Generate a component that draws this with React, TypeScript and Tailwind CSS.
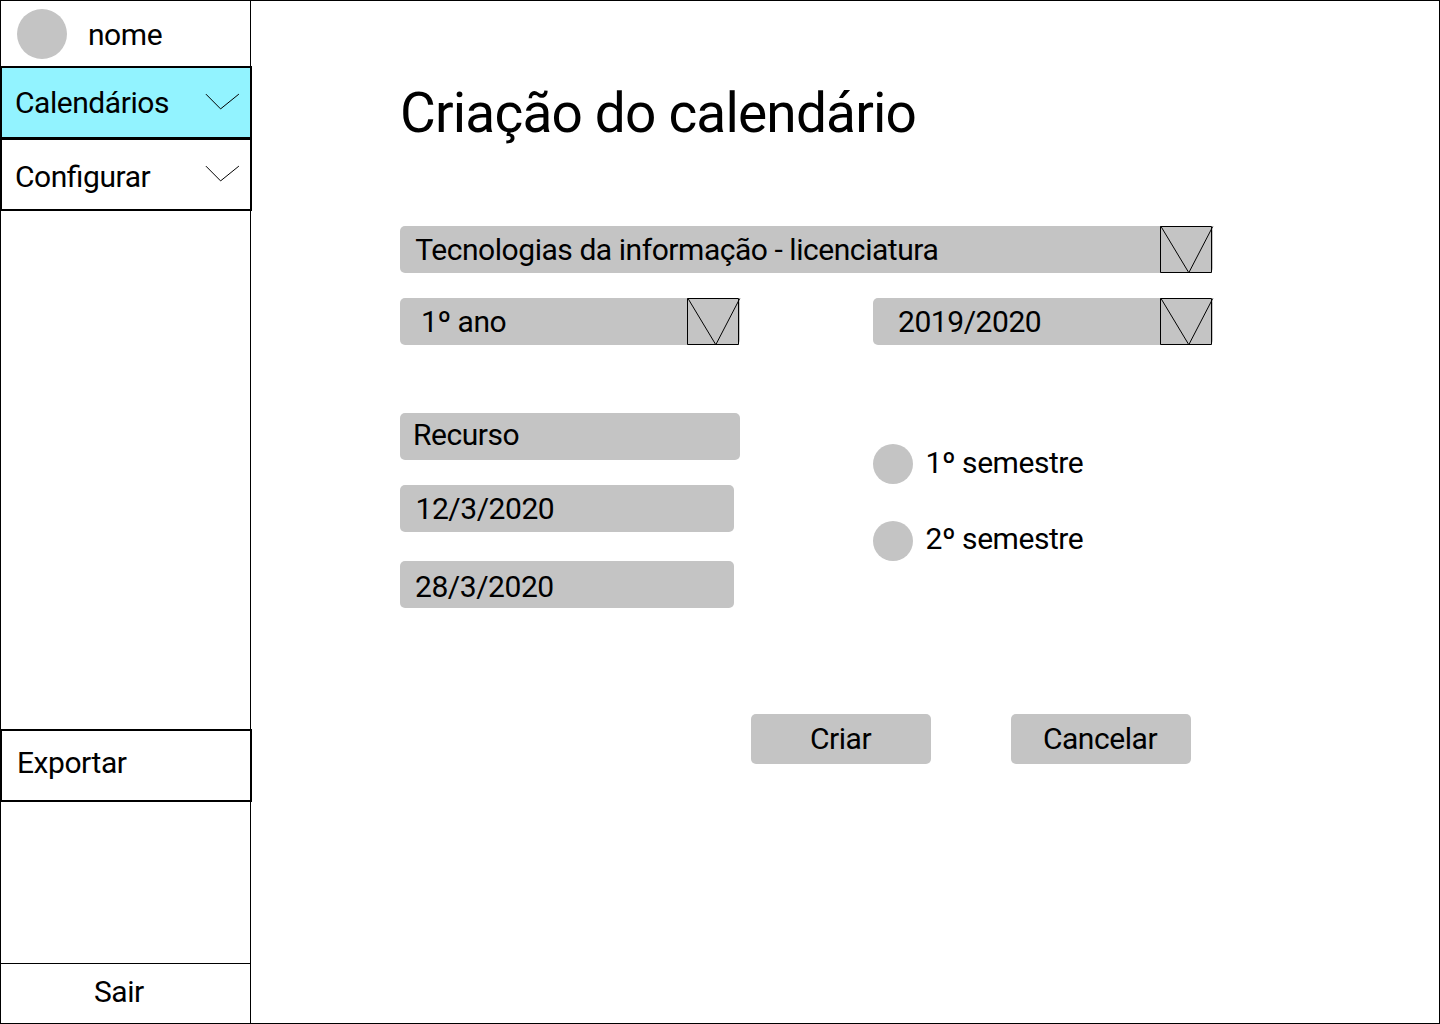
import type { ReactNode } from "react";

function Chevron() {
  return (
    <svg className="h-[17px] w-[35px] shrink-0" viewBox="0 0 35 17" fill="none" stroke="black">
      <path d="M0.9 1.1L15.6 15.9L33.9 1.1" />
    </svg>
  );
}

function DropButton() {
  return (
    <svg className="h-12 w-[54px] shrink-0" viewBox="0 0 54 48" fill="none" stroke="black">
      <path d="M0.5 0.5H51.5V46.5H0.5Z" fill="#C4C4C4" />
      <path d="M1 0.5L28.8 46.7L52.8 0.5" />
    </svg>
  );
}

function Select({ children, className }: { children: ReactNode; className: string }) {
  return (
    <div className={`flex h-[47px] items-start rounded-[5px] bg-[#C4C4C4] ${className}`}>
      <span className="flex-1 pt-[6px]">{children}</span>
      <span className="-mr-px flex">
        <DropButton />
      </span>
    </div>
  );
}

function Input({ children, className }: { children: ReactNode; className: string }) {
  return <div className={`h-[47px] rounded-[5px] bg-[#C4C4C4] ${className}`}>{children}</div>;
}

function Radio({ children, className }: { children: ReactNode; className: string }) {
  return (
    <label className={`flex h-10 items-start gap-[12.5px] ${className}`}>
      <span className="-mt-px size-10 rounded-full bg-[#C4C4C4]" />
      <span>{children}</span>
    </label>
  );
}

export default function App() {
  return (
    <div className="flex h-[1024px] w-[1440px] overflow-hidden border border-black bg-white font-['Roboto',sans-serif] text-[30px] leading-[35px] tracking-[-0.015em] text-black">
      <aside className="flex w-[250px] shrink-0 flex-col border-r border-black">
        <div className="flex h-[65px] items-start pl-4 pt-2">
          <span className="size-[50px] rounded-full bg-[#C4C4C4]" />
          <span className="pl-[21px] pt-2">nome</span>
        </div>
        <nav className="-ml-px flex w-[252px] flex-col">
          <div className="flex h-[73px] items-start justify-between border-2 border-black bg-[#92F3FF] pl-[13px] pr-[10px] pt-[17px]">
            <span>Calendários</span>
            <span className="flex pt-2">
              <Chevron />
            </span>
          </div>
          <div className="-mt-px flex h-[73px] items-start justify-between border-2 border-black pl-[13px] pr-[10px] pt-[19px]">
            <span className="[font-feature-settings:'liga']">Configurar</span>
            <span className="flex pt-[6px]">
              <Chevron />
            </span>
          </div>
        </nav>
        <div className="-ml-px mt-[518px] h-[73px] w-[252px] border-2 border-black pl-[15px] pt-[14px]">
          Exportar
        </div>
        <div className="mt-auto h-[60px] border-t border-black pl-[93px] pt-[10px]">Sair</div>
      </aside>

      <main className="flex w-[962px] flex-col pl-[149px] pt-[80px]">
        <h1 className="whitespace-nowrap text-[55px] leading-[64px] tracking-[-0.015em]">Criação do calendário</h1>

        <Select className="mt-[81px] pl-[15.25px]">Tecnologias da informação - licenciatura</Select>

        <div className="mt-[25px] flex justify-between">
          <Select className="w-[340px] pl-[21px]">1º ano</Select>
          <Select className="w-[340px] pl-[25px]">2019/2020</Select>
        </div>

        <div className="mt-[68px] flex">
          <div className="flex w-[473px] flex-col">
            <Input className="w-[340px] pl-[13px] pt-1">Recurso</Input>
            <Input className="mt-[25px] w-[334px] pl-[15.5px] pt-[6px]">12/3/2020</Input>
            <Input className="mt-[29px] w-[334px] pl-[15px] pt-2">28/3/2020</Input>
          </div>
          <div className="flex flex-col pt-8">
            <Radio className="mb-9">1º semestre</Radio>
            <Radio className="pt-px">
              <span className="-mt-px block">2º semestre</span>
            </Radio>
          </div>
        </div>

        <div className="mt-[106px] flex gap-20 pl-[351px]">
          <button className="flex h-[50px] w-[180px] justify-center rounded-[5px] bg-[#C4C4C4] pr-px pt-[7px]">Criar</button>
          <button className="flex h-[50px] w-[180px] justify-center rounded-[5px] bg-[#C4C4C4] pr-[2px] pt-[7px]">Cancelar</button>
        </div>
      </main>
    </div>
  );
}
